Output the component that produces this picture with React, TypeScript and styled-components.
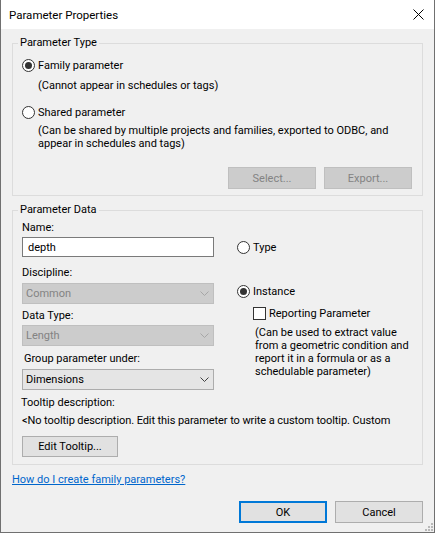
import React from "react";
import styled, { createGlobalStyle } from "styled-components";

const Global = createGlobalStyle`
  html, body { margin: 0; padding: 0; background: #ffffff; }
  body { font-family: Roboto, "Liberation Sans", Arial, sans-serif; font-size: 11px; color: #000; }
  * { box-sizing: border-box; }
`;

const Window = styled.div`
  position: relative;
  width: 435px;
  height: 533px;
  background: #f0f0f0;
  border: 1px solid #707070;
  border-top: none;
  display: flex;
  flex-direction: column;
`;

const TitleBar = styled.div`
  height: 29px;
  flex: none;
  background: #ffffff;
  display: flex;
  align-items: center;
  justify-content: space-between;
  padding-left: 8px;
  padding-right: 10px;
  font-size: 11.5px;
`;

const Body = styled.div`
  display: flex;
  flex-direction: column;
  padding-left: 11px;
  padding-top: 6px;
`;

const Group = styled.fieldset<{ $gap?: number }>`
  margin: ${(p) => p.$gap ?? 0}px 0 0 0;
  padding: 0;
  border: 1px solid #dcdcdc;
  width: 411px;
  min-width: 0;
`;

const Legend = styled.legend`
  margin-left: 5px;
  padding: 0 2px;
  height: 16px;
  line-height: 16px;
  font-size: 11px;
`;

const GroupInner = styled.div<{ $pt: number; $pb: number }>`
  display: flex;
  flex-direction: column;
  padding: ${(p) => p.$pt}px 10px ${(p) => p.$pb}px 9px;
`;

const Row = styled.div<{ $mt?: number; $ml?: number }>`
  display: flex;
  align-items: center;
  height: 16px;
  gap: 3px;
  margin-top: ${(p) => p.$mt ?? 0}px;
  margin-left: ${(p) => p.$ml ?? 0}px;
  white-space: nowrap;
`;

const RadioCircle = styled.span<{ $checked?: boolean }>`
  flex: none;
  width: 13px;
  height: 13px;
  border: 1px solid #333333;
  border-radius: 50%;
  background: #ffffff;
  display: inline-flex;
  align-items: center;
  justify-content: center;
  &::after {
    content: "";
    width: 7px;
    height: 7px;
    border-radius: 50%;
    background: #333333;
    display: ${(p) => (p.$checked ? "block" : "none")};
  }
`;

const CheckBox = styled.span`
  flex: none;
  width: 13px;
  height: 13px;
  border: 1px solid #333333;
  background: #ffffff;
`;

const Text = styled.div<{ $mt?: number; $ml?: number; $lh?: number; $tight?: boolean }>`
  margin-top: ${(p) => p.$mt ?? 0}px;
  margin-left: ${(p) => p.$ml ?? 0}px;
  line-height: ${(p) => p.$lh ?? 16}px;
  letter-spacing: ${(p) => (p.$tight ? "-0.08px" : "normal")};
  white-space: nowrap;
`;

const ButtonRow = styled.div<{ $mt: number; $start?: boolean }>`
  display: flex;
  justify-content: ${(p) => (p.$start ? "flex-start" : "flex-end")};
  gap: 8px;
  margin-top: ${(p) => p.$mt}px;
`;

const Button = styled.div<{ $disabled?: boolean; $default?: boolean; $w?: number; $h?: number }>`
  width: ${(p) => p.$w ?? 88}px;
  height: ${(p) => p.$h ?? 22}px;
  display: flex;
  align-items: center;
  justify-content: center;
  background: ${(p) => (p.$disabled ? "#cccccc" : "#e1e1e1")};
  border: ${(p) =>
    p.$default ? "2px solid #0078d7" : p.$disabled ? "1px solid #bfbfbf" : "1px solid #adadad"};
  color: ${(p) => (p.$disabled ? "#838383" : "#000")};
  white-space: nowrap;
`;

const Columns = styled.div`
  display: flex;
`;

const LeftCol = styled.div`
  width: 192px;
  display: flex;
  flex-direction: column;
`;

const RightCol = styled.div`
  margin-left: 23px;
  display: flex;
  flex-direction: column;
`;

const TextBox = styled.div<{ $mt: number }>`
  margin-top: ${(p) => p.$mt}px;
  height: 20px;
  background: #ffffff;
  border: 1px solid #7a7a7a;
  padding-left: 5px;
  display: flex;
  align-items: center;
`;

const Select = styled.div<{ $mt: number; $disabled?: boolean }>`
  margin-top: ${(p) => p.$mt}px;
  height: 21px;
  background: ${(p) => (p.$disabled ? "#cccccc" : "#e5e5e5")};
  border: 1px solid ${(p) => (p.$disabled ? "#bfbfbf" : "#acacac")};
  color: ${(p) => (p.$disabled ? "#838383" : "#000")};
  padding: 0 4px 0 3px;
  display: flex;
  align-items: center;
  justify-content: space-between;
`;

const Link = styled.a`
  margin-top: 7px;
  line-height: 16px;
  color: #0066cc;
  text-decoration: underline;
  align-self: flex-start;
  cursor: pointer;
`;

const Footer = styled.div`
  display: flex;
  justify-content: flex-end;
  gap: 8px;
  margin-top: 13px;
  padding-right: 11px;
`;

const Grip = styled.svg`
  position: absolute;
  right: 1px;
  bottom: 1px;
`;

const Chevron = ({ disabled }: { disabled?: boolean }) => (
  <svg width="9" height="5" viewBox="0 0 9 5">
    <polyline
      points="0.5,0.5 4.5,4.5 8.5,0.5"
      fill="none"
      stroke={disabled ? "#a6a6a6" : "#404040"}
      strokeWidth="1"
    />
  </svg>
);

const CloseIcon = () => (
  <svg width="11" height="11" viewBox="0 0 11 11">
    <path d="M0.5 0.5 L10.5 10.5 M10.5 0.5 L0.5 10.5" stroke="#000" strokeWidth="1" fill="none" />
  </svg>
);

export default function App() {
  return (
    <>
      <Global />
      <Window>
        <TitleBar>
          <span>Parameter Properties</span>
          <CloseIcon />
        </TitleBar>
        <Body>
          <Group>
            <Legend>Parameter Type</Legend>
            <GroupInner $pt={6} $pb={6}>
              <Row>
                <RadioCircle $checked />
                <span>Family parameter</span>
              </Row>
              <Text $mt={5} $ml={16}>(Cannot appear in schedules or tags)</Text>
              <Row $mt={10}>
                <RadioCircle />
                <span>Shared parameter</span>
              </Row>
              <Text $mt={4} $ml={16} $lh={13}>
                (Can be shared by multiple projects and families, exported to ODBC, and
                <br />
                appear in schedules and tags)
              </Text>
              <ButtonRow $mt={17}>
                <Button $disabled>Select...</Button>
                <Button $disabled>Export...</Button>
              </ButtonRow>
            </GroupInner>
          </Group>

          <Group $gap={6}>
            <Legend>Parameter Data</Legend>
            <GroupInner $pt={2} $pb={7}>
              <Columns>
                <LeftCol>
                  <Text>Name:</Text>
                  <TextBox $mt={1}>depth</TextBox>
                  <Text $mt={8}>Discipline:</Text>
                  <Select $mt={2} $disabled>
                    <span>Common</span>
                    <Chevron disabled />
                  </Select>
                  <Text $mt={4}>Data Type:</Text>
                  <Select $mt={1} $disabled>
                    <span>Length</span>
                    <Chevron disabled />
                  </Select>
                  <Text $mt={5} $ml={2}>Group parameter under:</Text>
                  <Select $mt={2}>
                    <span>Dimensions</span>
                    <Chevron />
                  </Select>
                </LeftCol>
                <RightCol>
                  <Row $mt={19}>
                    <RadioCircle />
                    <span>Type</span>
                  </Row>
                  <Row $mt={28}>
                    <RadioCircle $checked />
                    <span>Instance</span>
                  </Row>
                  <Row $mt={6} $ml={16}>
                    <CheckBox />
                    <span>Reporting Parameter</span>
                  </Row>
                  <Text $mt={5} $ml={18} $lh={13}>
                    (Can be used to extract value
                    <br />
                    from a geometric condition and
                    <br />
                    report it in a formula or as a
                    <br />
                    schedulable parameter)
                  </Text>
                </RightCol>
              </Columns>
              <Text $mt={5} $ml={-1}>Tooltip description:</Text>
              <Text $mt={2} $tight>
                &lt;No tooltip description. Edit this parameter to write a custom tooltip. Custom
              </Text>
              <ButtonRow $mt={7} $start>
                <Button $w={96} $h={21}>Edit Tooltip...</Button>
              </ButtonRow>
            </GroupInner>
          </Group>

          <Link>How do I create family parameters?</Link>
        </Body>
        <Footer>
          <Button $default>OK</Button>
          <Button>Cancel</Button>
        </Footer>
        <Grip width="8" height="8" viewBox="0 0 8 8">
          <rect x="6" y="0" width="2" height="2" fill="#b8b8b8" />
          <rect x="3" y="3" width="2" height="2" fill="#b8b8b8" />
          <rect x="6" y="3" width="2" height="2" fill="#b8b8b8" />
          <rect x="0" y="6" width="2" height="2" fill="#b8b8b8" />
          <rect x="3" y="6" width="2" height="2" fill="#b8b8b8" />
          <rect x="6" y="6" width="2" height="2" fill="#b8b8b8" />
        </Grip>
      </Window>
    </>
  );
}
